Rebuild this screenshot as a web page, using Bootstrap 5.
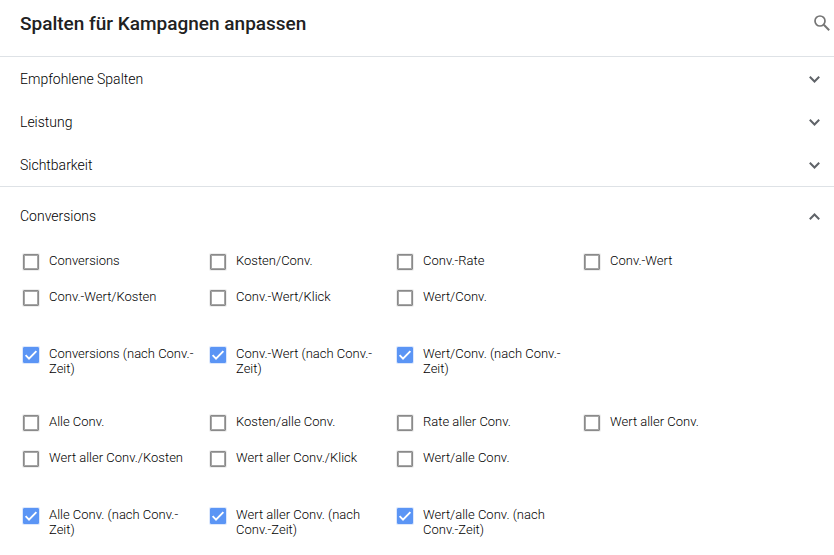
<!DOCTYPE html>
<html lang="de">
<head>
<meta charset="utf-8">
<meta name="viewport" content="width=device-width, initial-scale=1">
<title>Spalten für Kampagnen anpassen</title>
<link href="https://cdn.jsdelivr.net/npm/bootstrap@5.3.0/dist/css/bootstrap.min.css" rel="stylesheet">
<style>
body { font-family: Roboto, "Liberation Sans", sans-serif; font-weight: 300; color: #000; background: #fff; }
.panel-head { height: 57px; padding: 0 4px 10px 20px; border-color: #dadce0; }
.panel-title { padding-top: 2px; font-size: 19px; line-height: 24px; font-weight: 500; color: #212121; }
.section-group { border-color: #dadce0; }
.section-toggle { height: 43px; padding: 0 14px 0 20px; font-size: 14px; line-height: 20px; font-weight: 300; color: #000; }
.section-toggle.is-open { height: 58px; }
.section-toggle svg { color: #5f6368; }
.section-toggle:not(.is-open) svg { margin-top: 2px; }
.search-btn { color: #757575; }
.section-body { padding: 8px 66px 0 20px; }
.option-set { margin-bottom: 21px; }
.option-set.is-tall { margin-bottom: 17px; }
.option { min-height: 36px; gap: 10px; padding: 0 8px 0 3px; }
.is-tall .option { min-height: 51px; }
.option label { font-size: 13px; line-height: 15px; }
.option .form-check-input { width: 16px; height: 16px; margin: 1px 0 0; border: 1px solid #8a8a8a; border-radius: 1px; box-shadow: inset 0 0 0 1px #a6a6a6, 0 0 0 1px #eeeeee; }
.option .form-check-input:checked { background-color: #5b95f5; border-color: #5b95f5; box-shadow: 0 0 0 1px #dce8fd; background-size: 16px 16px; background-image: url("data:image/svg+xml,%3csvg xmlns='http://www.w3.org/2000/svg' viewBox='0 0 16 16'%3e%3cpath d='M2.6 8.2 6 11.6 13.4 4.1' fill='none' stroke='%23fff' stroke-width='1.9'/%3e%3c/svg%3e"); }
</style>
<script src="https://cdn.jsdelivr.net/npm/bootstrap@5.3.0/dist/js/bootstrap.bundle.min.js" defer></script>
</head>
<body>
<header class="panel-head d-flex align-items-center justify-content-between border-bottom">
  <h1 class="panel-title mb-0">Spalten für Kampagnen anpassen</h1>
  <button type="button" class="search-btn btn p-0 border-0 d-flex" aria-label="Suchen">
    <svg width="16" height="16" viewBox="0 0 16 16" fill="none" stroke="currentColor" aria-hidden="true"><circle cx="6" cy="6" r="5" stroke-width="1.7"/><path d="m9.8 9.8 5.4 5.4" stroke-width="2"/></svg>
  </button>
</header>
<main>
  <div class="section-group border-bottom">
    <button type="button" class="section-toggle btn w-100 border-0 rounded-0 d-flex align-items-center justify-content-between" aria-expanded="false">Empfohlene Spalten
      <svg width="11" height="7" viewBox="0 0 11 7" fill="none" stroke="currentColor" stroke-width="2" aria-hidden="true"><path d="m.8.8 4.7 4.7L10.2.8"/></svg></button>
    <button type="button" class="section-toggle btn w-100 border-0 rounded-0 d-flex align-items-center justify-content-between" aria-expanded="false">Leistung
      <svg width="11" height="7" viewBox="0 0 11 7" fill="none" stroke="currentColor" stroke-width="2" aria-hidden="true"><path d="m.8.8 4.7 4.7L10.2.8"/></svg></button>
    <button type="button" class="section-toggle btn w-100 border-0 rounded-0 d-flex align-items-center justify-content-between" aria-expanded="false">Sichtbarkeit
      <svg width="11" height="7" viewBox="0 0 11 7" fill="none" stroke="currentColor" stroke-width="2" aria-hidden="true"><path d="m.8.8 4.7 4.7L10.2.8"/></svg></button>
  </div>
  <button type="button" class="section-toggle is-open btn w-100 border-0 rounded-0 d-flex align-items-center justify-content-between" aria-expanded="true" aria-controls="conversions">Conversions
    <svg width="11" height="7" viewBox="0 0 11 7" fill="none" stroke="currentColor" stroke-width="2" aria-hidden="true"><path d="m.8 6.2 4.7-4.7 4.7 4.7"/></svg></button>
  <div class="section-body" id="conversions">
    <div class="option-set row g-0">
      <div class="option col-3 d-flex align-items-start"><input class="form-check-input flex-shrink-0" type="checkbox" id="c1"><label for="c1">Conversions</label></div>
      <div class="option col-3 d-flex align-items-start"><input class="form-check-input flex-shrink-0" type="checkbox" id="c2"><label for="c2">Kosten/Conv.</label></div>
      <div class="option col-3 d-flex align-items-start"><input class="form-check-input flex-shrink-0" type="checkbox" id="c3"><label for="c3">Conv.-Rate</label></div>
      <div class="option col-3 d-flex align-items-start"><input class="form-check-input flex-shrink-0" type="checkbox" id="c4"><label for="c4">Conv.-Wert</label></div>
      <div class="option col-3 d-flex align-items-start"><input class="form-check-input flex-shrink-0" type="checkbox" id="c5"><label for="c5">Conv.-Wert/Kosten</label></div>
      <div class="option col-3 d-flex align-items-start"><input class="form-check-input flex-shrink-0" type="checkbox" id="c6"><label for="c6">Conv.-Wert/Klick</label></div>
      <div class="option col-3 d-flex align-items-start"><input class="form-check-input flex-shrink-0" type="checkbox" id="c7"><label for="c7">Wert/Conv.</label></div>
    </div>
    <div class="option-set is-tall row g-0">
      <div class="option col-3 d-flex align-items-start"><input class="form-check-input flex-shrink-0" type="checkbox" id="t1" checked><label for="t1">Conversions (nach Conv.-Zeit)</label></div>
      <div class="option col-3 d-flex align-items-start"><input class="form-check-input flex-shrink-0" type="checkbox" id="t2" checked><label for="t2">Conv.-Wert (nach Conv.-Zeit)</label></div>
      <div class="option col-3 d-flex align-items-start"><input class="form-check-input flex-shrink-0" type="checkbox" id="t3" checked><label for="t3">Wert/Conv. (nach Conv.-Zeit)</label></div>
    </div>
    <div class="option-set row g-0">
      <div class="option col-3 d-flex align-items-start"><input class="form-check-input flex-shrink-0" type="checkbox" id="a1"><label for="a1">Alle Conv.</label></div>
      <div class="option col-3 d-flex align-items-start"><input class="form-check-input flex-shrink-0" type="checkbox" id="a2"><label for="a2">Kosten/alle Conv.</label></div>
      <div class="option col-3 d-flex align-items-start"><input class="form-check-input flex-shrink-0" type="checkbox" id="a3"><label for="a3">Rate aller Conv.</label></div>
      <div class="option col-3 d-flex align-items-start"><input class="form-check-input flex-shrink-0" type="checkbox" id="a4"><label for="a4">Wert aller Conv.</label></div>
      <div class="option col-3 d-flex align-items-start"><input class="form-check-input flex-shrink-0" type="checkbox" id="a5"><label for="a5">Wert aller Conv./Kosten</label></div>
      <div class="option col-3 d-flex align-items-start"><input class="form-check-input flex-shrink-0" type="checkbox" id="a6"><label for="a6">Wert aller Conv./Klick</label></div>
      <div class="option col-3 d-flex align-items-start"><input class="form-check-input flex-shrink-0" type="checkbox" id="a7"><label for="a7">Wert/alle Conv.</label></div>
    </div>
    <div class="row g-0">
      <div class="option col-3 d-flex align-items-start"><input class="form-check-input flex-shrink-0" type="checkbox" id="z1" checked><label for="z1">Alle Conv. (nach Conv.-Zeit)</label></div>
      <div class="option col-3 d-flex align-items-start"><input class="form-check-input flex-shrink-0" type="checkbox" id="z2" checked><label for="z2">Wert aller Conv. (nach Conv.-Zeit)</label></div>
      <div class="option col-3 d-flex align-items-start"><input class="form-check-input flex-shrink-0" type="checkbox" id="z3" checked><label for="z3">Wert/alle Conv. (nach Conv.-Zeit)</label></div>
    </div>
  </div>
</main>
</body>
</html>
